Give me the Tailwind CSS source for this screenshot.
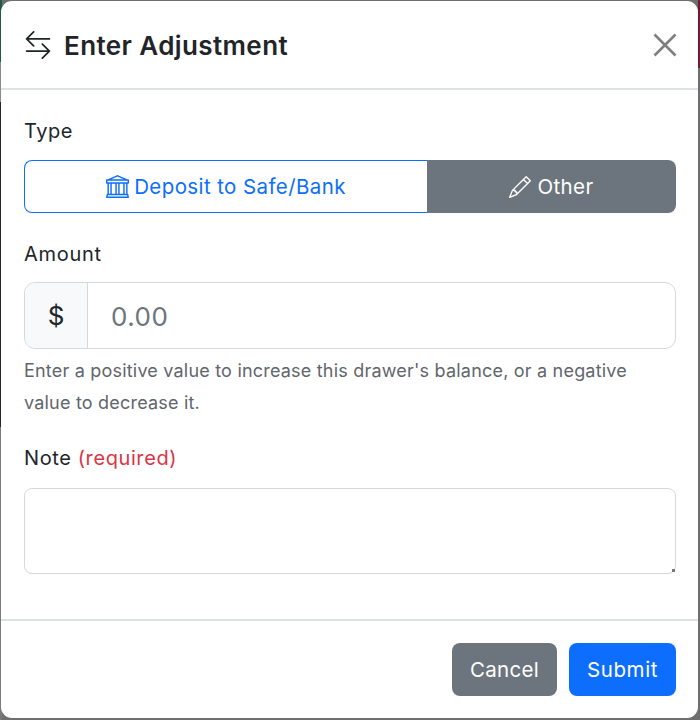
<!DOCTYPE html>
<html lang="en">

<head>
  <meta charset="UTF-8">
  <script src="https://cdn.jsdelivr.net/npm/@tailwindcss/browser@4"></script>
  <title>Enter Adjustment</title>
</head>

<body class="relative w-[700px] h-[720px] overflow-hidden bg-[#6f6f6f] font-['Inter','Noto_Sans',sans-serif] text-[#212529]">
  <!-- page behind the modal, only its edges show -->
  <div class="absolute left-0 top-0 w-[2px] h-full flex flex-col">
    <div class="h-[62px] bg-[#1f5b42]"></div>
    <div class="h-[40px] bg-[#8a8a8a]"></div>
    <div class="h-[325px] bg-[#262626]"></div>
    <div class="flex-1 bg-[#7a7a7a]"></div>
  </div>
  <div class="absolute right-0 top-0 w-[2px] h-[68px] bg-[#701c30]"></div>

  <div class="relative m-px mr-[2px] w-[697px] h-[717px] bg-white rounded-[11px] flex flex-col">
    <header class="h-[89px] flex items-center justify-between pl-[23px] pr-[21px] border-b-2 border-[#dee2e6] shrink-0">
      <h1 class="flex items-center gap-[12px] text-[26px] font-semibold tracking-[0.4px] pt-[1px]">
        <svg class="w-[28px] h-[28px] -mt-[1px]" viewBox="0 0 16 16" fill="currentColor"><path fill-rule="evenodd" d="M1 11.5a.5.5 0 0 0 .5.5h11.793l-3.147 3.146a.5.5 0 0 0 .708.708l4-4a.5.5 0 0 0 0-.708l-4-4a.5.5 0 0 0-.708.708L13.293 11H1.5a.5.5 0 0 0-.5.5m14-7a.5.5 0 0 1-.5.5H2.707l3.147 3.146a.5.5 0 1 1-.708.708l-4-4a.5.5 0 0 1 0-.708l4-4a.5.5 0 1 1 .708.708L2.707 4H14.5a.5.5 0 0 1 .5.5"/></svg>
        Enter Adjustment
      </h1>
      <svg class="w-[24px] h-[24px] text-[#7f7f7f]" viewBox="0 0 24 24" fill="none" stroke="currentColor" stroke-width="2.6"><path d="M1.5 1.5l21 21M22.5 1.5l-21 21"/></svg>
    </header>

    <main class="flex-1 px-[23px] pt-[28px]">
      <label class="block text-[20px] leading-[26px] tracking-[0.5px]">Type</label>
      <div class="flex h-[53px] mt-[16px] w-[652px] text-[20.5px] tracking-[0.4px]">
        <div class="w-[403px] flex items-center justify-center gap-[5px] border-[1.5px] border-[#0d6efd] border-r-0 rounded-l-[8px] text-[#0d6efd]">
          <svg class="w-[23px] h-[23px]" viewBox="0 0 16 16" fill="currentColor"><path d="m8 0 6.61 3h.89a.5.5 0 0 1 .5.5v2a.5.5 0 0 1-.5.5H15v7a.5.5 0 0 1 .485.38l.5 2a.498.498 0 0 1-.485.62H.5a.498.498 0 0 1-.485-.62l.5-2A.5.5 0 0 1 1 13V6H.5a.5.5 0 0 1-.5-.5v-2A.5.5 0 0 1 .5 3h.89zM3.777 3h8.447L8 1zM2 6v7h1V6zm2 0v7h2.5V6zm3.5 0v7h1V6zm2 0v7H12V6zM13 6v7h1V6zm2-1V4H1v1zm-.39 9H1.39l-.25 1h13.72z"/></svg>
          <span class="pt-[2px]">Deposit to Safe/Bank</span>
        </div>
        <div class="flex-1 flex items-center justify-center gap-[6px] bg-[#6c757d] rounded-r-[8px] text-white">
          <svg class="w-[22px] h-[22px]" viewBox="0 0 16 16" fill="currentColor"><path d="M12.146.146a.5.5 0 0 1 .708 0l3 3a.5.5 0 0 1 0 .708l-10 10a.5.5 0 0 1-.168.11l-5 2a.5.5 0 0 1-.65-.65l2-5a.5.5 0 0 1 .11-.168zM11.207 2.5 13.5 4.793 14.793 3.5 12.5 1.207zm1.586 3L10.5 3.207 4 9.707V10h.5a.5.5 0 0 1 .5.5v.5h.5a.5.5 0 0 1 .5.5v.5h.293zm-9.761 5.175-.106.106-1.528 3.821 3.821-1.528.106-.106A.5.5 0 0 1 5 12.5V12h-.5a.5.5 0 0 1-.5-.5V11h-.5a.5.5 0 0 1-.468-.325z"/></svg>
          <span class="pt-[2px]">Other</span>
        </div>
      </div>

      <label class="block text-[20px] leading-[26px] mt-[28px] tracking-[0.7px]">Amount</label>
      <div class="flex h-[67px] mt-[15px] w-[652px] border border-[#d5d9dd] rounded-[11px] overflow-hidden">
        <span class="w-[63px] flex items-center justify-center bg-[#f8f9fa] border-r border-[#d5d9dd] text-[26px]">$</span>
        <input class="flex-1 pl-[23px] pt-[2px] text-[26px] tracking-[0.5px] outline-none placeholder:text-[#6c757d] placeholder:opacity-100" placeholder="0.00">
      </div>
      <p class="mt-[6px] text-[18px] leading-[32px] tracking-[0.2px] text-[#5f666c] w-[625px]">Enter a positive value to increase this drawer's balance, or a negative value to decrease it.</p>

      <label class="block text-[20px] leading-[26px] mt-[26px] tracking-[0.6px]">Note <span class="text-[#dc3545]">(required)</span></label>
      <div class="relative mt-[17px] w-[652px]">
        <textarea class="block w-full h-[86px] resize-none border border-[#d5d9dd] rounded-[8px] outline-none"></textarea>
        <span class="absolute right-[1px] bottom-[2px] w-[3px] h-[3px] bg-[#777]"></span>
      </div>
    </main>

    <footer class="h-[99px] shrink-0 border-t-2 border-[#dee2e6] flex justify-end gap-[12px] pt-[22px] pr-[22px] text-[20.5px] tracking-[0.3px] text-white">
      <button class="w-[105px] h-[53px] bg-[#6c757d] rounded-[8px] pt-[2px]">Cancel</button>
      <button class="w-[107px] h-[53px] bg-[#0d6efd] rounded-[8px] pt-[2px] tracking-[0.6px]">Submit</button>
    </footer>
  </div>
</body>

</html>
